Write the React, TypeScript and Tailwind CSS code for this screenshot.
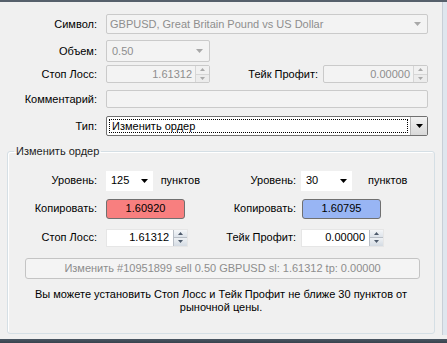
import React from "react";

const font = { fontFamily: "'Liberation Sans', Arial, sans-serif" };

const Arrow = ({ color = "#000", w = 7 }: { color?: string; w?: number }) => (
  <svg width={w} height={4} viewBox="0 0 7 4">
    <path d="M0 0H7L3.5 4Z" fill={color} />
  </svg>
);

const Spin = ({ disabled }: { disabled?: boolean }) => {
  const c = disabled ? "#a9a9a9" : "#4d5a6b";
  return (
    <div className={`flex h-full w-[14px] flex-col border-l ${disabled ? "border-[#d6d6d6]" : "border-[#b8bec6]"}`}>
      <div className={`flex flex-1 items-center justify-center border-b ${disabled ? "border-[#d6d6d6] bg-[#f1f1f1]" : "border-[#b8bec6] bg-gradient-to-b from-[#f4f6f8] to-[#dde3ea]"}`}>
        <svg width={5} height={3} viewBox="0 0 5 3"><path d="M0 3H5L2.5 0Z" fill={c} /></svg>
      </div>
      <div className={`flex flex-1 items-center justify-center ${disabled ? "bg-[#ececec]" : "bg-gradient-to-b from-[#eef1f4] to-[#d4dbe3]"}`}>
        <svg width={5} height={3} viewBox="0 0 5 3"><path d="M0 0H5L2.5 3Z" fill={c} /></svg>
      </div>
    </div>
  );
};

const Label = ({ w, children }: { w: string; children: React.ReactNode }) => (
  <div className={`${w} shrink-0 text-right`}>{children}</div>
);

export default function App() {
  return (
    <div className="flex h-[343px] w-[447px] flex-col bg-[#f0f0f0] text-[11px] text-black" style={font}>
      <div className="h-[2px] bg-[#56606b]" />
      <div className="flex flex-1">
        <div className="flex flex-1 flex-col border-r border-[#c8ced6]">
          {/* top section */}
          <div className="flex flex-col pt-[12px]">
            <div className="flex h-[20px] items-center">
              <Label w="w-[97px]">Символ:</Label>
              <div className="ml-[9px] flex h-full w-[322px] items-center justify-between rounded-[2px] border border-[#cacaca] bg-[#f3f3f3] pl-[3px] pr-[6px] text-[#8e8e8e]">
                <span>GBPUSD, Great Britain Pound vs US Dollar</span>
                <Arrow color="#a8a8a8" />
              </div>
            </div>
            <div className="mt-[6px] flex h-[22px] items-center">
              <Label w="w-[97px]">Объем:</Label>
              <div className="ml-[9px] flex h-full w-[104px] items-center justify-between rounded-[2px] border border-[#cacaca] bg-[#f3f3f3] pl-[5px] pr-[6px] text-[#8e8e8e]">
                <span>0.50</span>
                <Arrow color="#a8a8a8" />
              </div>
            </div>
            <div className="mt-[3px] flex h-[18px] items-center">
              <Label w="w-[97px]">Стоп Лосс:</Label>
              <div className="ml-[9px] flex h-full w-[104px] items-center justify-end rounded-[2px] border border-[#cacaca] bg-[#f3f3f3] text-[#8e8e8e]">
                <span className="pr-[3px]">1.61312</span>
                <Spin disabled />
              </div>
              <Label w="w-[108px]">Тейк Профит:</Label>
              <div className="ml-[5px] flex h-full w-[105px] items-center justify-end rounded-[2px] border border-[#cacaca] bg-[#f3f3f3] text-[#8e8e8e]">
                <span className="pr-[3px]">0.00000</span>
                <Spin disabled />
              </div>
            </div>
            <div className="mt-[7px] flex h-[18px] items-center">
              <Label w="w-[97px]">Комментарий:</Label>
              <div className="ml-[9px] h-full w-[322px] rounded-[2px] border border-[#cacaca] bg-[#f3f3f3]" />
            </div>
            <div className="mt-[8px] flex h-[20px] items-center">
              <Label w="w-[97px]">Тип:</Label>
              <div className="ml-[9px] flex h-full w-[322px] items-stretch rounded-[2px] border border-[#707070] bg-white">
                <div className="m-[2px] flex flex-1 items-center border border-dotted border-black pl-[2px]">
                  Изменить ордер
                </div>
                <div className="flex w-[17px] items-center justify-center border-l border-[#b4b4b4] bg-gradient-to-b from-[#f2f2f2] to-[#d9d9d9]">
                  <Arrow />
                </div>
              </div>
            </div>
          </div>

          {/* group */}
          <fieldset className="mx-[7px] mt-[7px] flex h-[191px] flex-col rounded-[3px] border border-[#d5dfe5] px-0 pt-[11px] shadow-[inset_1px_1px_0_#ffffff]">
            <legend className="ml-[6px] px-[2px] text-[#1e1e1e]">Изменить ордер</legend>
            <div className="flex h-[20px] items-center">
              <div className="flex w-[192px] items-center">
                <Label w="w-[89px]">Уровень:</Label>
                <div className="ml-[9px] flex h-[20px] w-[51px] items-center justify-between bg-white pl-[5px] pr-[5px]">
                  <span>125</span>
                  <Arrow />
                </div>
                <span className="ml-[8px]">пунктов</span>
              </div>
              <Label w="w-[96px]">Уровень:</Label>
              <div className="ml-[5px] flex h-[20px] w-[51px] items-center justify-between bg-white pl-[5px] pr-[5px]">
                <span>30</span>
                <Arrow />
              </div>
              <span className="ml-[16px]">пунктов</span>
            </div>
            <div className="mt-[8px] flex h-[20px] items-center">
              <div className="flex w-[192px] items-center">
                <Label w="w-[89px]">Копировать:</Label>
                <div className="ml-[9px] flex h-[20px] w-[79px] items-center justify-center rounded-[3px] border border-[#707070] bg-[#f87f7f]">
                  1.60920
                </div>
              </div>
              <Label w="w-[96px]">Копировать:</Label>
              <div className="ml-[6px] flex h-[20px] w-[79px] items-center justify-center rounded-[3px] border border-[#707070] bg-[#98b5f4]">
                1.60795
              </div>
            </div>
            <div className="mt-[10px] flex h-[18px] items-center">
              <div className="flex w-[192px] items-center">
                <Label w="w-[89px]">Стоп Лосс:</Label>
                <div className="ml-[9px] flex h-[18px] w-[82px] items-center justify-end border border-[#e6e6e6] bg-white">
                  <span className="pr-[4px]">1.61312</span>
                  <Spin />
                </div>
              </div>
              <Label w="w-[96px]">Тейк Профит:</Label>
              <div className="ml-[5px] flex h-[18px] w-[83px] items-center justify-end border border-[#e6e6e6] bg-white">
                <span className="pr-[4px]">0.00000</span>
                <Spin />
              </div>
            </div>
            <div className="ml-[17px] mt-[11px] flex h-[21px] w-[395px] items-center justify-center rounded-[3px] border border-[#c4c4c4] bg-[#f4f4f4] text-[#8d8d8d]">
              Изменить #10951899 sell 0.50 GBPUSD sl: 1.61312 tp: 0.00000
            </div>
            <div className="mt-[9px] text-center leading-[13px]">
              Вы можете установить Стоп Лосс и Тейк Профит не ближе 30 пунктов от
              <br />
              рыночной цены.
            </div>
          </fieldset>
        </div>
        <div className="w-[4px] bg-[#dfe6ee]" />
      </div>
      <div className="mt-[4px] h-[4px] bg-gradient-to-b from-[#4a5663] to-[#38424d]" />
    </div>
  );
}
